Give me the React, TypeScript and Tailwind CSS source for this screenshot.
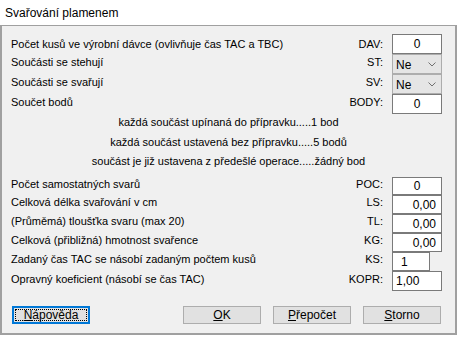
import React from "react";

const font = { fontFamily: '"Liberation Sans", Arial, sans-serif' };

function Row({ label, code, h, children, shift = true }: { label: string; code: string; h: string; children: React.ReactNode; shift?: boolean }) {
  return (
    <div className={`flex items-center ${h}`}>
      <span className={`flex-1 whitespace-nowrap ${shift ? "pb-[4px]" : ""}`}>{label}</span>
      <span className={`text-right whitespace-nowrap ${shift ? "pb-[4px]" : ""}`}>{code}</span>
      <div className="ml-[9px] flex h-full w-[50px]">{children}</div>
    </div>
  );
}

function Box({ value, align, w = "w-[50px]" }: { value: string; align: string; w?: string }) {
  return (
    <div className={`flex h-full ${w} items-center border border-[#7a7a7a] bg-white text-[12px] text-black ${align}`}>
      {value}
    </div>
  );
}

function Combo() {
  return (
    <div className="flex h-full w-[50px] items-center justify-between border border-[#adadad] bg-[#e5e5e5] pl-[3px] pr-[5px] text-[12px]">
      <span className="pt-[2px]">Ne</span>
      <svg width="8" height="5" viewBox="0 0 8 5">
        <path d="M0.5 0.5 L4 4 L7.5 0.5" fill="none" stroke="#707070" strokeWidth="1" />
      </svg>
    </div>
  );
}

function Btn({ children, focus = false }: { children: React.ReactNode; focus?: boolean }) {
  if (focus) {
    return (
      <div className="flex h-[18px] w-[78px] items-center justify-center border-2 border-[#0078d7] bg-[#e1e1e1] p-[1px]">
        <div className="flex h-full w-full items-center justify-center border border-dotted border-black text-[12px]">{children}</div>
      </div>
    );
  }
  return (
    <div className="flex h-[18px] w-[78px] items-center justify-center border border-[#adadad] bg-[#e1e1e1] text-[12px]">
      {children}
    </div>
  );
}

export default function App() {
  return (
    <div className="h-[338px] w-[458px] bg-white text-black" style={font}>
      <div className="flex h-[25px] items-center pl-[5px] text-[12px]">Svařování plamenem</div>
      <div className="h-[310px] w-[457px] border-x-2 border-b-2 border-t border-[#a0a0a0] bg-[#f0f0f0] pl-[9px] pr-[13px] pt-[8px] text-[11px]">
        <Row label="Počet kusů ve výrobní dávce (ovlivňuje čas TAC a TBC)" code="DAV:" h="h-[20px]" shift={false}>
          <Box value="0" align="justify-center" />
        </Row>
        <Row label="Součásti se stehují" code="ST:" h="h-[20px]">
          <Combo />
        </Row>
        <Row label="Součásti se svařují" code="SV:" h="h-[20px]">
          <Combo />
        </Row>
        <Row label="Součet bodů" code="BODY:" h="h-[20px]">
          <Box value="0" align="justify-center" />
        </Row>
        <div className="flex h-[16px] items-center justify-center pl-[4px]">každá součást upínaná do přípravku.....1 bod</div>
        <div className="flex h-[24px] items-center justify-center pl-[4px]">každá součást ustavená bez přípravku.....5 bodů</div>
        <div className="flex h-[14px] items-center justify-center pl-[4px]">součást je již ustavena z předešlé operace.....žádný bod</div>
        <div className="h-[9px]" />
        <Row label="Počet samostatných svarů" code="POC:" h="h-[18px]">
          <Box value="0" align="justify-center" />
        </Row>
        <Row label="Celková délka svařování v cm" code="LS:" h="h-[19px]">
          <Box value="0,00" align="justify-end pr-[5px]" />
        </Row>
        <Row label="(Průměmá) tloušťka svaru (max 20)" code="TL:" h="h-[19px]">
          <Box value="0,00" align="justify-end pr-[5px]" />
        </Row>
        <Row label="Celková (přibližná) hmotnost svařence" code="KG:" h="h-[19px]">
          <Box value="0,00" align="justify-end pr-[5px]" />
        </Row>
        <Row label="Zadaný čas TAC se násobí zadaným počtem kusů" code="KS:" h="h-[19px]">
          <Box value="1" align="justify-start pl-[8px]" w="w-[38px]" />
        </Row>
        <Row label="Opravný koeficient (násobí se čas TAC)" code="KOPR:" h="h-[20px]">
          <Box value="1,00" align="justify-start pl-[3px]" />
        </Row>
        <div className="mt-[15px] flex pl-[1px] pr-[1px]">
          <Btn focus>
            <span><span className="underline">N</span>ápověda</span>
          </Btn>
          <div className="flex-1" />
          <div className="flex gap-[12px]">
            <Btn><span><span className="underline">O</span>K</span></Btn>
            <Btn><span><span className="underline">P</span>řepočet</span></Btn>
            <Btn><span><span className="underline">S</span>torno</span></Btn>
          </div>
        </div>
      </div>
    </div>
  );
}
